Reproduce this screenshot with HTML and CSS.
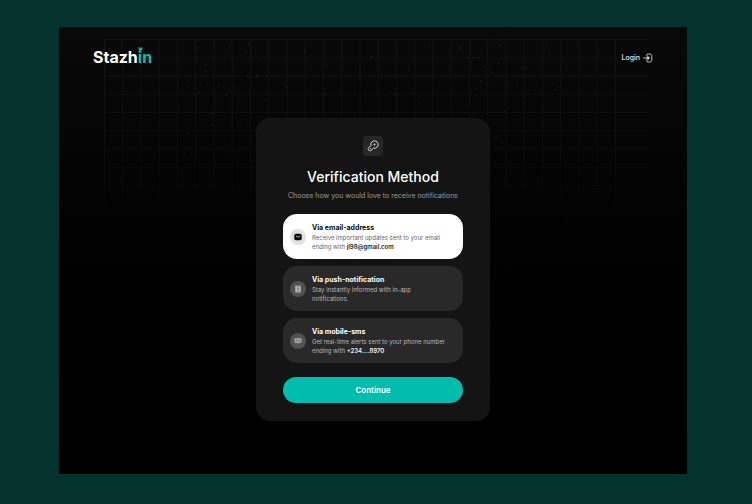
FILE: index.html
```html
<!DOCTYPE html>
<html lang="en">
<head>
    <meta charset="UTF-8">
    <meta name="viewport" content="width=device-width, initial-scale=1.0">
    <title>Stazhin - Verification Method</title>
    <link rel="stylesheet" href="styles.css">
</head>
<body>
    <div class="page">
        <svg class="grid-bg" viewBox="0 0 628 200" aria-hidden="true">
            <defs>
                <linearGradient id="fade" x1="0" y1="0" x2="0" y2="1">
                    <stop offset="0" stop-color="#fff"/>
                    <stop offset="0.5" stop-color="#fff" stop-opacity="0.7"/>
                    <stop offset="1" stop-color="#fff" stop-opacity="0"/>
                </linearGradient>
                <mask id="fadeMask"><rect width="628" height="200" fill="url(#fade)"/></mask>
            </defs>
            <g mask="url(#fadeMask)">
                <path stroke="#171717" stroke-width="0.8" fill="none" d="M45 12.5H589M45 30.8H589M45 49H589M45 67.3H589M45 85.5H589M45 103.8H589M45 122H589M45 140.3H589M45 158.5H589M45 176.8H589
                    M45.5 12V200M63.7 12V200M82 12V200M100.2 12V200M118.5 12V200M136.7 12V200M155 12V200M173.2 12V200M191.5 12V200M209.7 12V200M228 12V200M246.2 12V200M264.5 12V200M282.7 12V200M301 12V200M319.2 12V200M337.5 12V200M355.7 12V200M374 12V200M392.2 12V200M410.5 12V200M428.7 12V200M447 12V200M465.2 12V200M483.5 12V200M501.7 12V200M520 12V200M538.2 12V200M556.5 12V200"/>
                <path stroke="#444" stroke-width="1" stroke-linecap="round" d="M139 21h0M171 19h0M190 17h0M187 26h0M200 34h0M147 38h0M147 44h0M175 41h0M189 50h0M198 49h0M207 49h0M130 60h0M142 58h0M140 66h0M160 58h0M174 59h0M156 71h0M167 68h0M180 71h0M162 75h0M207 72h0M153 86h0M153 98h0M181 99h0M129 107h0M151 118h0M132 127h0M156 135h0M184 108h0
                    M228 60h0M246 24h0M268 38h0M290 52h0M312 30h0M331 65h0M350 43h0M370 20h0M360 76h0M401 21h0M409 31h0M412 35h0M420 31h0M425 39h0M433 46h0M441 19h0M439 36h0M463 41h0M488 16h0M491 28h0M422 54h0M418 62h0M448 58h0M458 58h0M476 67h0M465 70h0M496 63h0M499 60h0M485 79h0M446 84h0M408 78h0M485 96h0M437 110h0M443 116h0M396 51h0"/>
            </g>
        </svg>

        <header class="header">
            <a href="#" class="logo" aria-label="Stazhin">Stazh<span class="logo-in">in<svg class="logo-mark" viewBox="0 0 5 4" aria-hidden="true"><circle cx="0.8" cy="0.9" r="0.7"/><circle cx="4.2" cy="0.9" r="0.7"/><circle cx="2.5" cy="2.2" r="1.6"/></svg></span></a>
            <a href="#" class="login">Login
                <svg class="login-icon" viewBox="0 0 10 10" aria-hidden="true"><path d="M3.6 3V2.6C3.6 1.4 4.2 1 5.4 1h1C8 1 8.8 1.8 8.8 3.4v3.2C8.8 8.2 8 9 6.4 9h-1C4.2 9 3.6 8.6 3.6 7.4V7M0.8 5h5"/><path class="login-arrow" d="M5 3.7L6.4 5 5 6.3z"/></svg>
            </a>
        </header>

        <main class="main">
            <form class="card">
                <div class="key">
                    <svg class="key-icon" viewBox="0 0 12 12" aria-hidden="true"><path d="M10.2 7.1A3.7 3.7 0 0 1 6.5 8.1L4.2 10.4C4 10.6 3.6 10.8 3.3 10.7L2.2 10.6C1.8 10.5 1.4 10.1 1.4 9.8L1.2 8.7C1.2 8.4 1.4 8 1.6 7.8L3.9 5.5A3.7 3.7 0 1 1 10.2 7.1ZM3.1 8.1L4.3 9.3"/><circle cx="7.5" cy="4.5" r="0.6"/></svg>
                </div>
                <h1 class="title">Verification Method</h1>
                <p class="subtitle">Choose how you would love to receive notifications</p>

                <div class="options">
                    <input type="radio" name="method" id="email" class="radio" checked>
                    <label for="email" class="option">
                        <span class="circle">
                            <svg viewBox="0 0 8 8" aria-hidden="true"><rect x="0.3" y="0.8" width="7.4" height="6.4" rx="1.6" fill="#080808"/><path d="M2.2 3L4 4.2 5.8 3" stroke="#fff" stroke-width="0.7" fill="none" stroke-linecap="round"/></svg>
                        </span>
                        <span class="text">
                            <span class="option-title">Via email-address</span>
                            <span class="option-desc">Receive important updates sent to your email<br>ending with <b>jl98@gmail.com</b></span>
                        </span>
                    </label>

                    <input type="radio" name="method" id="push" class="radio">
                    <label for="push" class="option">
                        <span class="circle">
                            <svg viewBox="0 0 8 8" aria-hidden="true"><rect x="1.2" y="0.4" width="5.6" height="7.2" rx="1.1" fill="#b4b4b4"/><path d="M3 1.7h2M3 3.8h2" stroke="#555" stroke-width="0.7"/><circle cx="4" cy="5.9" r="0.7" fill="#555"/></svg>
                        </span>
                        <span class="text">
                            <span class="option-title">Via push-notification</span>
                            <span class="option-desc">Stay instantly informed with in-app<br>notifications.</span>
                        </span>
                    </label>

                    <input type="radio" name="method" id="sms" class="radio">
                    <label for="sms" class="option">
                        <span class="circle">
                            <svg viewBox="0 0 8 8" aria-hidden="true"><path d="M1.6 0.9h4.8c0.8 0 1.3 0.5 1.3 1.3v2.6c0 0.8-0.5 1.3-1.3 1.3H5L4 7.3 3 6.1H1.6C0.8 6.1 0.3 5.6 0.3 4.8V2.2C0.3 1.4 0.8 0.9 1.6 0.9z" fill="#999"/><path d="M2 3.5h0.6M3.7 3.5h0.6M5.4 3.5H6" stroke="#555" stroke-width="0.7"/></svg>
                        </span>
                        <span class="text">
                            <span class="option-title">Via mobile-sms</span>
                            <span class="option-desc">Get real-time alerts sent to your phone number<br>ending with <b>+234....8970</b></span>
                        </span>
                    </label>
                </div>

                <button type="submit" class="continue">Continue</button>
            </form>
        </main>
    </div>
</body>
</html>
```
FILE: styles.css
```css
* {
    box-sizing: border-box;
}

body {
    margin: 0;
    min-height: 100vh;
    padding: 27px 65px 30px 59px;
    display: flex;
    background-color: #04332d;
    font-family: Inter, "Liberation Sans", sans-serif;
    color: #fff;
}

.page {
    position: relative;
    flex: 1;
    display: flex;
    flex-direction: column;
    background: linear-gradient(#090909, #020202 45%, #000);
}

/* decoration behind the content */
.grid-bg {
    position: absolute;
    top: 0;
    left: 0;
    width: 100%;
}

.header {
    position: relative;
    display: flex;
    justify-content: space-between;
    align-items: center;
    padding: 20px 34px 0;
}

.logo {
    font-size: 16px;
    line-height: 21px;
    font-weight: 700;
    color: #fff;
    text-decoration: none;
}

.logo-in {
    position: relative;
    color: #04bfae;
}

.logo-mark {
    position: absolute;
    top: 0;
    left: 0;
    width: 5px;
    height: 4px;
    fill: #04bfae;
}

.login {
    display: flex;
    align-items: center;
    gap: 3px;
    font-size: 7px;
    font-weight: 500;
    color: #e4e4e4;
    text-decoration: none;
}

.login-icon {
    width: 10px;
    height: 10px;
    fill: none;
    stroke: #e4e4e4;
    stroke-width: 0.9;
    stroke-linecap: round;
}

.login-arrow {
    fill: #e4e4e4;
}

.main {
    position: relative;
    display: flex;
    justify-content: center;
    padding: 50px 20px;
}

.card {
    width: 100%;
    max-width: 234px;
    padding: 18px 27px;
    border-radius: 14px;
    background-color: #141414;
    display: flex;
    flex-direction: column;
}

.key {
    align-self: center;
    display: flex;
    align-items: center;
    justify-content: center;
    width: 20px;
    height: 20px;
    border-radius: 4px;
    background-color: #272727;
}

.key-icon {
    width: 12px;
    height: 12px;
    fill: none;
    stroke: #f0f0f0;
    stroke-width: 0.9;
    stroke-linejoin: round;
}

.title {
    margin: 12px 0 0;
    font-size: 14px;
    line-height: 18px;
    font-weight: 500;
    text-align: center;
}

.subtitle {
    margin: 5px 0 0;
    font-size: 7px;
    line-height: 10px;
    color: #9a9a9a;
    text-align: center;
    white-space: nowrap;
}

.options {
    display: flex;
    flex-direction: column;
    gap: 7px;
    margin-top: 13px;
    position: relative;
}

.radio {
    position: absolute;
    opacity: 0;
    margin: 0;
}

.option {
    display: flex;
    align-items: center;
    gap: 6px;
    padding: 8px 7px;
    border-radius: 14px;
    background-color: #292929;
    cursor: pointer;
}

.circle {
    flex: none;
    display: flex;
    align-items: center;
    justify-content: center;
    width: 16px;
    height: 16px;
    border-radius: 50%;
    background-color: #525252;
}

.circle svg {
    width: 8px;
    height: 8px;
}

.option-title {
    display: block;
    font-size: 7px;
    line-height: 11px;
    font-weight: 700;
}

.option-desc {
    display: block;
    font-size: 6px;
    line-height: 9px;
    color: #b8b8b8;
}

.option-desc b {
    font-weight: 600;
    color: #f2f2f2;
}

.radio:checked + .option {
    background-color: #fff;
    color: #0a0a0a;
}

.radio:checked + .option .circle {
    background-color: #e2e2e2;
}

.radio:checked + .option .option-desc {
    color: #666;
}

.radio:checked + .option b {
    color: #222;
}

.radio:focus-visible + .option {
    outline: 1px solid #04bfae;
}

.continue {
    margin-top: 14px;
    height: 26px;
    border: none;
    border-radius: 13px;
    background-color: #02bdad;
    color: #fff;
    font-family: inherit;
    font-size: 8px;
    font-weight: 600;
    cursor: pointer;
}
```
